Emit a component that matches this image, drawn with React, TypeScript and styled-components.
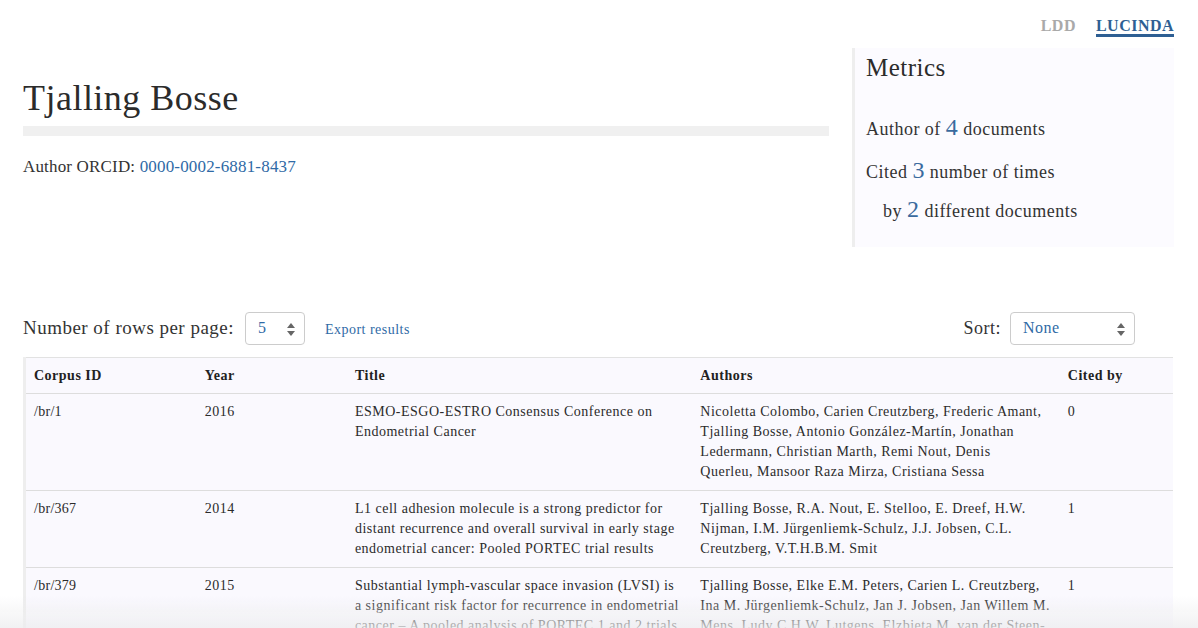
import React from "react";
import styled, { createGlobalStyle } from "styled-components";

const Global = createGlobalStyle`
  html, body { margin: 0; padding: 0; background: #ffffff; }
  body {
    font-family: "Liberation Serif", "Times New Roman", serif;
    color: #333333;
    letter-spacing: 0.03em;
  }
  * { box-sizing: border-box; }
`;

const Page = styled.div`
  padding: 0 24px 0 23px;
`;

const Nav = styled.nav`
  display: flex;
  justify-content: flex-end;
  gap: 20px;
  padding-top: 15px;
  height: 48px;
`;

const NavLink = styled.a<{ $active?: boolean }>`
  font-size: 16px;
  font-weight: bold;
  text-decoration: none;
  color: ${(p) => (p.$active ? "#2e5f93" : "#a9a9a9")};
  border-bottom: 3px solid ${(p) => (p.$active ? "#2e5f93" : "transparent")};
  height: 22px;
  line-height: 21px;
`;

const HeaderRow = styled.div`
  display: flex;
  gap: 23px;
  align-items: flex-start;
`;

const Intro = styled.div`
  flex: 1;
`;

const Name = styled.h1`
  margin: 28px 0 0;
  font-size: 36px;
  font-weight: normal;
  line-height: 44px;
  color: #2b2b2b;
  padding-bottom: 6px;
  border-bottom: 10px solid #f0f0f0;
`;

const Orcid = styled.p`
  margin: 20px 0 0;
  font-size: 17px;
  line-height: 22px;
  letter-spacing: 0.01em;
`;

const Link = styled.a`
  color: #2f6aa6;
  text-decoration: none;
`;

const Metrics = styled.aside`
  width: 322px;
  height: 199px;
  background: #fcfbff;
  border-left: 3px solid #eeeeee;
  padding: 4px 10px 0 11px;
`;

const MetricsTitle = styled.h2`
  margin: 0 0 23px;
  font-size: 25px;
  font-weight: normal;
  line-height: 32px;
  color: #2b2b2b;
`;

const Stat = styled.p<{ $h: number; $indent?: boolean }>`
  margin: 0;
  font-size: 18px;
  line-height: 40px;
  height: ${(p) => p.$h}px;
  padding-left: ${(p) => (p.$indent ? 17 : 0)}px;
`;

const Num = styled.span`
  font-size: 24px;
  color: #3a6a9e;
`;

const Controls = styled.div`
  display: flex;
  align-items: center;
  margin-top: 64px;
  height: 34px;
  padding-right: 39px;
`;

const Label = styled.span`
  font-size: 19px;
  margin-right: 11px;
`;

const SelectBox = styled.div<{ $w: number }>`
  position: relative;
  width: ${(p) => p.$w}px;
  height: 33px;
  border: 1px solid #cccccc;
  border-radius: 4px;
  background: #ffffff;
  display: flex;
  align-items: center;
  padding-left: 12px;
  font-size: 16px;
  color: #2f6aa6;
`;

const Arrows = styled.svg`
  position: absolute;
  right: 9px;
  top: 10px;
`;

const Export = styled.a`
  margin-left: 20px;
  font-size: 14px;
  color: #2f6aa6;
  text-decoration: none;
  padding-top: 4px;
`;

const Spacer = styled.div`
  flex: 1;
`;

const SortLabel = styled.span`
  font-size: 18px;
  margin-right: 9px;
`;

const Table = styled.table`
  margin-top: 12px;
  width: 1150px;
  border-collapse: collapse;
  background: #faf9fe;
  border-left: 3px solid #eeeeee;
  border-top: 1px solid #e2e2e2;
  font-size: 14px;
  line-height: 20px;
  letter-spacing: 0.5px;
  table-layout: fixed;
`;

const Th = styled.th<{ $w: number }>`
  width: ${(p) => p.$w}px;
  text-align: left;
  padding: 8px 8px 7px;
  font-weight: bold;
  color: #222222;
  border-bottom: 1px solid #dddddd;
  vertical-align: top;
`;

const Td = styled.td`
  padding: 8px;
  vertical-align: top;
  border-bottom: 1px solid #dddddd;
  color: #2b2b2b;
`;

const IdCell = styled(Td)`
  letter-spacing: 0.02em;
`;

const Line = styled.span`
  display: block;
`;

const Fade = styled.div`
  position: fixed;
  left: 0;
  right: 0;
  bottom: 0;
  height: 32px;
  background: linear-gradient(to bottom, rgba(240, 240, 240, 0), rgba(236, 236, 238, 0.75));
  pointer-events: none;
`;

const UpDown = () => (
  <Arrows width="8" height="13" viewBox="0 0 8 13">
    <path d="M4 0 L8 5 L0 5 Z" fill="#666" />
    <path d="M4 13 L8 8 L0 8 Z" fill="#666" />
  </Arrows>
);

const rows = [
  {
    id: "/br/1",
    year: "2016",
    title: ["ESMO-ESGO-ESTRO Consensus Conference on", "Endometrial Cancer"],
    authors: [
      "Nicoletta Colombo, Carien Creutzberg, Frederic Amant,",
      "Tjalling Bosse, Antonio González-Martín, Jonathan",
      "Ledermann, Christian Marth, Remi Nout, Denis",
      "Querleu, Mansoor Raza Mirza, Cristiana Sessa",
    ],
    cited: "0",
  },
  {
    id: "/br/367",
    year: "2014",
    title: [
      "L1 cell adhesion molecule is a strong predictor for",
      "distant recurrence and overall survival in early stage",
      "endometrial cancer: Pooled PORTEC trial results",
    ],
    authors: [
      "Tjalling Bosse, R.A. Nout, E. Stelloo, E. Dreef, H.W.",
      "Nijman, I.M. Jürgenliemk-Schulz, J.J. Jobsen, C.L.",
      "Creutzberg, V.T.H.B.M. Smit",
    ],
    cited: "1",
  },
  {
    id: "/br/379",
    year: "2015",
    title: [
      "Substantial lymph-vascular space invasion (LVSI) is",
      "a significant risk factor for recurrence in endometrial",
      "cancer – A pooled analysis of PORTEC 1 and 2 trials",
    ],
    authors: [
      "Tjalling Bosse, Elke E.M. Peters, Carien L. Creutzberg,",
      "Ina M. Jürgenliemk-Schulz, Jan J. Jobsen, Jan Willem M.",
      "Mens, Ludy C.H.W. Lutgens, Elzbieta M. van der Steen-",
      "Banasik",
    ],
    cited: "1",
  },
];

export default function App() {
  return (
    <>
      <Global />
      <Page>
        <Nav>
          <NavLink>LDD</NavLink>
          <NavLink $active>LUCINDA</NavLink>
        </Nav>
        <HeaderRow>
          <Intro>
            <Name>Tjalling Bosse</Name>
            <Orcid>
              Author ORCID: <Link>0000-0002-6881-8437</Link>
            </Orcid>
          </Intro>
          <Metrics>
            <MetricsTitle>Metrics</MetricsTitle>
            <Stat $h={43}>
              Author of <Num>4</Num> documents
            </Stat>
            <Stat $h={39}>
              Cited <Num>3</Num> number of times
            </Stat>
            <Stat $h={40} $indent>
              by <Num>2</Num> different documents
            </Stat>
          </Metrics>
        </HeaderRow>
        <Controls>
          <Label>Number of rows per page:</Label>
          <SelectBox $w={60}>
            5
            <UpDown />
          </SelectBox>
          <Export>Export results</Export>
          <Spacer />
          <SortLabel>Sort:</SortLabel>
          <SelectBox $w={125}>
            None
            <UpDown />
          </SelectBox>
        </Controls>
        <Table>
          <thead>
            <tr>
              <Th $w={172}>Corpus ID</Th>
              <Th $w={150}>Year</Th>
              <Th $w={345}>Title</Th>
              <Th $w={367}>Authors</Th>
              <Th $w={113}>Cited by</Th>
            </tr>
          </thead>
          <tbody>
            {rows.map((r) => (
              <tr key={r.id}>
                <IdCell>{r.id}</IdCell>
                <Td>{r.year}</Td>
                <Td>
                  {r.title.map((l) => (
                    <Line key={l}>{l}</Line>
                  ))}
                </Td>
                <Td>
                  {r.authors.map((l) => (
                    <Line key={l}>{l}</Line>
                  ))}
                </Td>
                <Td>{r.cited}</Td>
              </tr>
            ))}
          </tbody>
        </Table>
      </Page>
      <Fade />
    </>
  );
}
